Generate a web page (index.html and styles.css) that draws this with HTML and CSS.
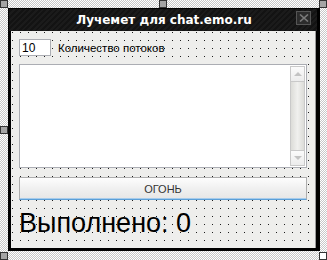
FILE: index.html
```html
<!DOCTYPE html>
<html lang="ru">
    <head>
        <meta charset="UTF-8" />
        <title>Лучемет для chat.emo.ru</title>
        <link rel="stylesheet" href="styles.css">
    </head>
    <body>
        <section class="designer">
            <div class="form">
                <header class="titlebar">
                    <h1>Лучемет для chat.emo.ru</h1>
                    <span class="close">
                        <svg width="10" height="8" viewBox="0 0 10 8">
                            <path d="M1 0.5 L9 7.5 M9 0.5 L1 7.5" stroke="#7a7a7a" stroke-width="1.6"/>
                        </svg>
                    </span>
                </header>
                <section class="client">
                    <div class="row">
                        <input class="threads" type="text" value="10" />
                        <label>Количество потоков</label>
                    </div>
                    <div class="memo">
                        <textarea></textarea>
                        <div class="scroll">
                            <span class="arrow up"></span>
                            <span class="track"></span>
                            <span class="arrow down"></span>
                        </div>
                    </div>
                    <button class="fire" type="button">ОГОНЬ</button>
                    <div class="done">Выполнено: 0</div>
                </section>
            </div>
            <!-- маркеры выделения -->
            <span class="grip tl"></span>
            <span class="grip tm"></span>
            <span class="grip tr"></span>
            <span class="grip ml"></span>
            <span class="grip bl"></span>
            <span class="grip br"></span>
        </section>
    </body>
</html>
```
FILE: styles.css
```css
* {
    padding: 0;
    margin: 0;
    box-sizing: border-box;
}
body {
    width: 327px;
    height: 260px;
    overflow: hidden;
    font-family: "Liberation Sans", Arial, sans-serif;
    background-color: #fff;
    background-image: repeating-conic-gradient(#c8c8c8 0 25%, #fff 0 50%);
    background-size: 2px 2px;
}
.designer {
    position: relative;
    width: 327px;
    height: 260px;
    padding: 8px 0 0 8px;
}

/* окно */
.form {
    width: 312px;
    height: 243px;
    background: #000;
    border: 1px solid #000;
    border-right-width: 3px;
    border-bottom-width: 3px;
    display: flex;
    flex-direction: column;
}
.titlebar {
    height: 22px;
    display: flex;
    align-items: center;
    justify-content: center;
    position: relative;
    background-color: #161616;
    background-image: repeating-linear-gradient(-45deg, #1b1b1b 0 2px, #131313 2px 4px);
}
.titlebar h1 {
    color: #fff;
    font-family: "DejaVu Sans", sans-serif;
    font-size: 12px;
    font-weight: bold;
    margin-left: 2px;
}
.close {
    position: absolute;
    right: 6px;
    top: 2px;
    width: 15px;
    height: 14px;
    border: 1px solid #555;
    background: #2c2c2c;
    display: flex;
    align-items: center;
    justify-content: center;
}
.client {
    flex: 1;
    margin: 0 1px 0 2px;
    border-right: 1px solid #9a9a9a;
    background-color: #eeeeec;
    background-image: conic-gradient(from 270deg at 1px 1px, #1d1d1d 25%, transparent 0);
    background-size: 8px 8px;
    background-position: 1px 1px;
    padding: 8px 8px 0 8px;
    display: flex;
    flex-direction: column;
}

/* строки */
.row {
    display: flex;
    align-items: center;
    gap: 7px;
    height: 17px;
}
.threads {
    width: 32px;
    height: 17px;
    border: 1px solid #abadb3;
    background: #fff;
    font: 12px "Liberation Sans", Arial, sans-serif;
    padding-left: 2px;
    outline: none;
}
.row label {
    font-size: 11.5px;
    color: #000;
}
.memo {
    margin-top: 8px;
    height: 104px;
    border: 1px solid #abadb3;
    background: #fff;
    display: flex;
    padding: 1px;
}
.memo textarea {
    flex: 1;
    border: none;
    resize: none;
    outline: none;
}
.scroll {
    width: 15px;
    border: 1px solid #c9c9c9;
    margin-left: 1px;
    display: flex;
    flex-direction: column;
    background: linear-gradient(90deg, #dcdcd8, #f0f0ee 50%, #dcdcd8);
}
.arrow {
    height: 15px;
    background: linear-gradient(#fbfbfb, #ececec);
    border-bottom: 1px solid #c9c9c9;
    display: flex;
    align-items: center;
    justify-content: center;
}
.arrow.down {
    border-bottom: none;
    border-top: 1px solid #c9c9c9;
}
.arrow::after {
    content: "";
    border-left: 4px solid transparent;
    border-right: 4px solid transparent;
}
.arrow.up::after {
    border-bottom: 4px solid #c3c3c3;
}
.arrow.down::after {
    border-top: 4px solid #c3c3c3;
}
.track {
    flex: 1;
}
.fire {
    margin-top: 9px;
    height: 23px;
    width: 100%;
    border: 1px solid #adadad;
    border-bottom: 1px solid #5a9fd8;
    box-shadow: inset 0 -1px 0 #a6cbeb;
    background: linear-gradient(#fdfdfd, #f0f0f0 50%, #e6e6e6);
    font: 11px "Liberation Sans", Arial, sans-serif;
    color: #333;
}
.done {
    margin-top: 8px;
    font-size: 27px;
    line-height: 30px;
    color: #000;
}

/* маркеры */
.grip {
    position: absolute;
    width: 8px;
    height: 8px;
    border: 1px solid #333;
    background: #a4a4a4;
}
.tl { left: 0; top: 0; }
.tm { left: 159px; top: 0; }
.tr { left: 319px; top: 0; }
.ml { left: 0; top: 126px; }
.bl { left: 0; top: 252px; }
.br { left: 319px; top: 252px; background: #fff; }
```
